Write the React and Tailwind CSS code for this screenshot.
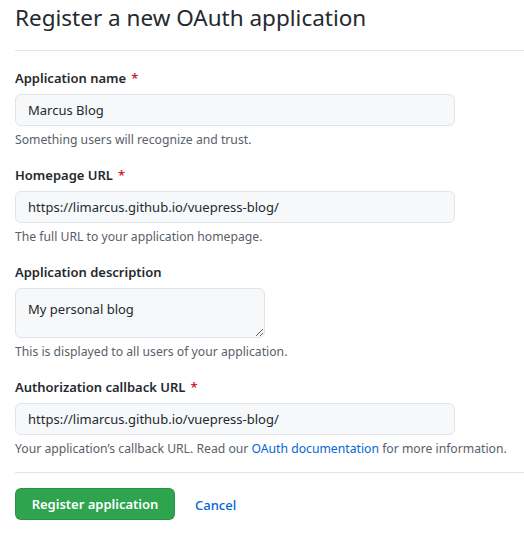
import React from "react";

const FONT = { fontFamily: '"Noto Sans", "Open Sans", sans-serif' };

const Label = ({ children, required = true }) => (
    <label className="block text-[13px] leading-[20px] font-semibold text-[#24292e]">
        {children}
        {required && <span className="text-[#cb2431] ml-[5px]">*</span>}
    </label>
);

const Note = ({ children }) => (
    <p className="mt-[5px] text-[12.2px] leading-[18px] text-[#586069]">{children}</p>
);

const TextInput = ({ value }) => (
    <input
        type="text"
        defaultValue={value}
        className="mt-[6px] block w-[440px] h-[32px] px-[12px] text-[13px] text-[#24292e] bg-[#f6f8fa] border border-[#e1e4e8] rounded-[6px] focus:outline-none"
    />
);

export default function App() {
    return (
        <div className="w-[524px] h-[542px] bg-white pl-[15px] overflow-hidden" style={FONT}>
            <div className="pb-[14px] border-b border-[#e1e4e8]">
                <h1 className="text-[22.5px] leading-[36px] font-normal text-[#24292e]">
                    Register a new OAuth application
                </h1>
            </div>

            <form className="mt-[17px]" onSubmit={(e) => e.preventDefault()}>
                <div>
                    <Label>Application name</Label>
                    <TextInput value="Marcus Blog" />
                    <Note>Something users will recognize and trust.</Note>
                </div>

                <div className="mt-[16px]">
                    <Label>Homepage URL</Label>
                    <TextInput value="https://limarcus.github.io/vuepress-blog/" />
                    <Note>The full URL to your application homepage.</Note>
                </div>

                <div className="mt-[16px]">
                    <Label required={false}>Application description</Label>
                    <textarea
                        defaultValue="My personal blog"
                        className="mt-[6px] block w-[250px] h-[50px] px-[12px] py-[8px] text-[13px] leading-[24px] text-[#24292e] bg-[#f6f8fa] border border-[#e1e4e8] rounded-[6px] resize focus:outline-none"
                    />
                    <Note>This is displayed to all users of your application.</Note>
                </div>

                <div className="mt-[16px]">
                    <Label>Authorization callback URL</Label>
                    <TextInput value="https://limarcus.github.io/vuepress-blog/" />
                    <Note>
                        Your application’s callback URL. Read our{" "}
                        <a href="#" className="text-[#0366d6]">OAuth documentation</a>{" "}
                        for more information.
                    </Note>
                </div>

                <div className="mt-[14px] border-t border-[#e1e4e8] pt-[15px] flex items-center">
                    <button
                        type="submit"
                        className="w-[160px] h-[32px] pt-[2px] rounded-[6px] bg-[#2ea44f] border border-[#1b1f2326] text-white text-[13px] font-semibold"
                    >
                        Register application
                    </button>
                    <a href="#" className="ml-[20px] pt-[3px] text-[13px] font-medium text-[#0366d6]">
                        Cancel
                    </a>
                </div>
            </form>
        </div>
    );
}
